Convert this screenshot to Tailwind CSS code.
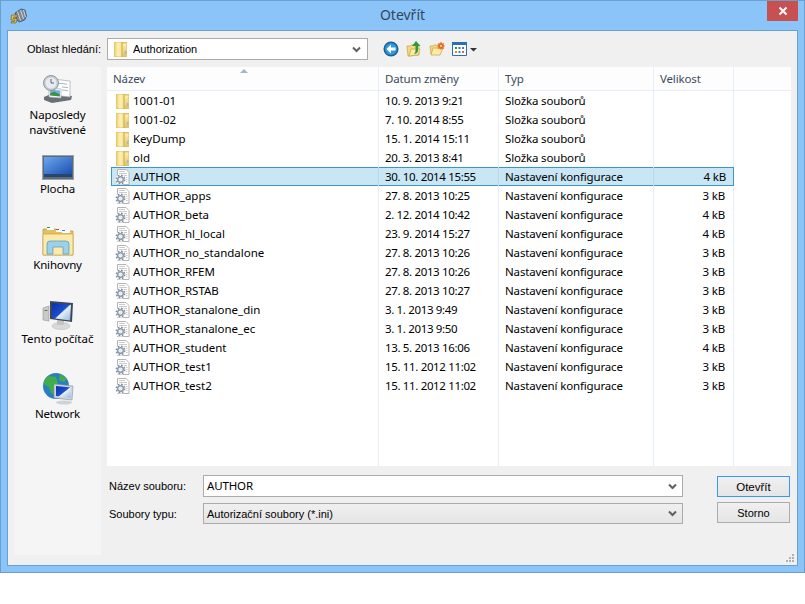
<!DOCTYPE html>
<html>
<head>
<meta charset="utf-8">
<title>Otevřít</title>
<script src="https://cdn.jsdelivr.net/npm/@tailwindcss/browser@4"></script>
</head>
<body class="bg-white font-['Noto_Sans','Open_Sans',sans-serif] text-[11.5px] tracking-[-0.15px] leading-[16px] text-black">

<svg width="0" height="0" class="absolute">
  <defs>
    <linearGradient id="fold" x1="0" y1="0" x2="1" y2="0"><stop offset="0" stop-color="#ecce70"/><stop offset=".5" stop-color="#fff2b4"/><stop offset="1" stop-color="#f8e294"/></linearGradient>
    <linearGradient id="foldr" x1="0" y1="0" x2="0" y2="1"><stop offset="0" stop-color="#fdeeb0"/><stop offset="1" stop-color="#e6c262"/></linearGradient>
    <linearGradient id="screen" x1="0" y1="0" x2="1" y2="1"><stop offset="0" stop-color="#6aa8ee"/><stop offset="1" stop-color="#1c4fb0"/></linearGradient>
    <linearGradient id="crt" x1="0" y1="0" x2="1" y2="1"><stop offset="0" stop-color="#0a2fa8"/><stop offset=".5" stop-color="#1b4fd0"/><stop offset=".55" stop-color="#e6f0fb"/><stop offset="1" stop-color="#8fb6e0"/></linearGradient>
    <symbol id="folder" viewBox="0 0 16 16">
      <path d="M1 1h13v15H1z" fill="#e2c266"/>
      <path d="M1.500 1.500h7v14h-7z" fill="url(#fold)"/>
      <path d="M8.500 1h1.200v15H8.500z" fill="#d6b354"/>
      <path d="M9.700 2.500h3.800V15H9.700z" fill="url(#foldr)"/>
      <path d="M12 10h1.500v3H12z" fill="#8fbce0"/>
    </symbol>
    <symbol id="conf" viewBox="0 0 16 16">
      <path d="M2.500.5h8.500l3 3v12H2.500z" fill="#fff" stroke="#b4b4b4"/>
      <path d="M4 2.500h6M4 4.500h8M4 6.500h8M11 8.500h1.500M11 10.500h1.500M11 12.500h1.500" stroke="#cbcbcb"/>
      <circle cx="5.500" cy="10.500" r="5.200" fill="#fff"/>
      <circle cx="5.500" cy="10.500" r="4.200" fill="none" stroke="#7e8c9c" stroke-width="1.500" stroke-dasharray="1.700 1.600"/>
      <circle cx="5.500" cy="10.500" r="2.800" fill="none" stroke="#8997a8" stroke-width="1.400"/>
      <circle cx="5.500" cy="10.500" r="1.300" fill="#dde6ef"/>
    </symbol>
    <symbol id="chev" viewBox="0 0 9 7">
      <path d="M1 1.500l3.500 3.500L8 1.500" fill="none" stroke="#606060" stroke-width="2"/>
    </symbol>
  </defs>
</svg>

<div class="w-[805px] h-[573px] flex flex-col border border-[#6b9fcf] bg-[#8bc4f8]">

  <!-- title bar -->
  <div class="h-[29px] shrink-0 relative flex items-center justify-center">
    <svg class="absolute left-[9px] top-[7px]" width="17" height="16" viewBox="0 0 17 16">
      <path d="M5 5l6-4 4 1 1.500 6-2 4-5 2-3-2z" fill="#7a8794" stroke="#39434e" stroke-width=".7"/>
      <path d="M7.500 3.500l3 9M10.500 2l3 9M13.500 2l2 7" stroke="#cdd6de" stroke-width="1"/>
      <path d="M1.500 7H7.500L7 9H3.800L3.500 10.500H6.500l.5 1-1 3.500H1l.4-1.500h3l.4-1.500H1z" fill="#e9b93a" stroke="#5a4410" stroke-width=".5"/>
    </svg>
    <span class="text-[14px] tracking-normal leading-[20px] text-[#34475a] -mt-[1px]">Otevřít</span>
    <div class="absolute right-[6px] top-0 w-[31px] h-[20px] bg-[#c75050] flex items-center justify-center">
      <svg width="10" height="10" viewBox="0 0 10 10"><path d="M1.500 1.500l7 7M8.500 1.500l-7 7" stroke="#fff" stroke-width="2"/></svg>
    </div>
  </div>

  <!-- client area -->
  <div class="mx-[6px] h-[536px] border border-[#6b9fcf] bg-[#f0f0f0] flex flex-col relative">

    <!-- toolbar -->
    <div class="h-[36px] shrink-0 flex items-center pl-[19px] font-['Liberation_Sans',sans-serif] text-[11px] tracking-normal">
      <span class="w-[80px] shrink-0 whitespace-nowrap">Oblast hledání:</span>
      <div class="w-[261px] h-[22px] border border-[#ababab] bg-white flex items-center pl-[5px] pr-[6px]">
        <svg width="16" height="16"><use href="#folder"/></svg>
        <span class="ml-[4px] flex-1">Authorization</span>
        <svg width="9" height="7"><use href="#chev"/></svg>
      </div>
      <div class="flex items-center ml-[15px]">
        <svg width="16" height="16" viewBox="0 0 16 16">
          <circle cx="8" cy="8" r="7.500" fill="#1a5f94"/>
          <circle cx="8" cy="8" r="6" fill="#2f9adf"/>
          <path d="M8 3.500L3.500 8 8 12.500v-3h4.500v-3H8z" fill="#fff"/>
        </svg>
        <svg class="ml-[7px]" width="16" height="16" viewBox="0 0 16 16">
          <path d="M1 5h3l1-1h8v10l-10 1H2z" fill="#f3d980" stroke="#c9a23f" stroke-width=".7"/>
          <path d="M3 15l2-7h9l-2 6z" fill="#fbeaa8" stroke="#c9a23f" stroke-width=".7"/>
          <path d="M10 0l4.500 5H12v5q-1 3-4 3 2-2 1.500-4V5H6z" fill="#2f9a3a"/>
        </svg>
        <svg class="ml-[7px]" width="16" height="16" viewBox="0 0 16 16">
          <path d="M1 5h3l1-1h6v9H2z" fill="#f3d980" stroke="#c9a23f" stroke-width=".7"/>
          <path d="M2 14l2-7h10l-3 7z" fill="#fbeaa8" stroke="#c9a23f" stroke-width=".7"/>
          <path d="M12 .5l1 2 2-.5-.5 2 1.500 1-1.500 1 .5 2-2-.5-1 1.500-1-1.500-2 .5.500-2L8 5l1.500-1L9 2l2 .5z" fill="#e8682c"/>
          <circle cx="12" cy="5" r="1" fill="#ffe9a0"/>
        </svg>
        <svg class="ml-[7px]" width="25" height="15" viewBox="0 0 25 15">
          <path d="M.5.500h14v13H.5z" fill="#fff" stroke="#2b6fb8"/>
          <path d="M0 0h15v3H0z" fill="#2b6fb8"/>
          <path d="M3 5h2v2H3z" fill="#4a8a3a"/><path d="M6.500 5h2v2h-2z" fill="#5b6b7c"/><path d="M10 5h2v2h-2z" fill="#3c7fd0"/>
          <path d="M3 9h2v2H3z" fill="#e08a2c"/><path d="M6.500 9h2v2h-2z" fill="#3c7fd0"/><path d="M10 9h2v2h-2z" fill="#c96a50"/>
          <path d="M18 6h7l-3.500 3.500z" fill="#333"/>
        </svg>
      </div>
    </div>

    <!-- main -->
    <div class="flex flex-1 min-h-0 pl-[6px] pr-[6px] pb-[10px] gap-[6px]">

      <!-- places -->
      <div class="w-[87px] bg-[#f5f5f5] flex flex-col items-center text-center">
        <svg class="mt-[6px]" width="32" height="32" viewBox="0 0 32 32">
          <path d="M2 24l7-3 21 2-1 4-19 3-8-3z" fill="#6a6f76"/>
          <path d="M11 6l17 2v16l-17-2z" fill="#fff" stroke="#a5aab0" stroke-width=".7"/>
          <path d="M14 10l11 1.200M20 14l6 .7M20 17l6 .7" stroke="#a9b4c2"/>
          <path d="M7 15l12 1v9L7 24z" fill="#fff" stroke="#a5aab0" stroke-width=".7"/>
          <path d="M8 16.500l10 1v4l-10-1z" fill="#6fb2e6"/>
          <path d="M8 20.500l4-2 6 3v2l-10-1z" fill="#3d8f4a"/>
          <circle cx="9" cy="10" r="7.500" fill="#c6ccd3" stroke="#8d959e"/>
          <circle cx="9" cy="10" r="5.500" fill="#e8ecf0"/>
          <path d="M9 6v4h3" fill="none" stroke="#5a6470" stroke-width="1"/>
        </svg>
        <div class="mt-[2px] leading-[15px]">Naposledy<br>navštívené</div>

        <svg class="mt-[18px]" width="32" height="25" viewBox="0 0 32 25">
          <path d="M0 0h32v25H0z" fill="#9aa0a8"/>
          <path d="M1 1h30v23H1z" fill="#5d6a78"/>
          <path d="M2 2h28v17H2z" fill="url(#screen)"/>
          <path d="M2 19h28v3H2z" fill="#27466f"/>
        </svg>
        <div class="mt-[1px] leading-[15px]">Plocha</div>

        <svg class="mt-[30px]" width="32" height="30" viewBox="0 0 32 30">
          <path d="M1 3h13l2 2h15v24H1z" fill="#e3c064" stroke="#b8964a" stroke-width=".7"/>
          <path d="M5 1h7v3H5z" fill="#fff"/><path d="M5 1h3v1H5z" fill="#2f9a3a"/>
          <path d="M14 3h8v3h-8z" fill="#fff"/><path d="M14 3h3v1h-3z" fill="#d2402c"/>
          <path d="M20 4h8v3h-8z" fill="#fff"/><path d="M20 4h3v1h-3z" fill="#3c7fd0"/>
          <path d="M1 8h30v21H1z" fill="#fbeaa8" stroke="#c9a23f" stroke-width=".7"/>
          <path d="M5 28V18q0-3 3-3h16q3 0 3 3v10h-6v-7H11v7z" fill="#9fd0ea" stroke="#4f97c2" stroke-width=".7"/>
        </svg>
        <div class="mt-[1px] leading-[15px]">Knihovny</div>

        <svg class="mt-[28px]" width="32" height="30" viewBox="0 0 32 30">
          <path d="M1 8l6-2v15l-6-1z" fill="#c9c9c9" stroke="#8a8a8a" stroke-width=".5"/>
          <path d="M2.500 10h3v1h-3z" fill="#4a8a3a"/>
          <ellipse cx="19" cy="26" rx="9" ry="3.500" fill="#d9d9d9" stroke="#b5b5b5" stroke-width=".5"/>
          <path d="M15 20h7v5h-7z" fill="#c4c4c4"/>
          <path d="M8 1l23 2-1 19-22-3z" fill="#3c4858"/>
          <path d="M10 3l19 1.800-1 15.700-18-2.500z" fill="url(#crt)"/>
        </svg>
        <div class="mt-[1px] leading-[15px] tracking-normal">Tento počítač</div>

        <svg class="mt-[27px]" width="32" height="32" viewBox="0 0 32 32">
          <circle cx="14" cy="13" r="13" fill="#2b7fbf"/>
          <path d="M6 3l8 1 2 6-4 5 1 7-4-2-2-6-5-3q0-5 4-8zM18 1l7 5-3 3-5-2z" fill="#3fae4a"/>
          <ellipse cx="22" cy="29.500" rx="8" ry="2" fill="#cfd2d6"/>
          <path d="M12 11l19 2-1 14-18-2z" fill="#cfd4da" stroke="#8a9098" stroke-width=".6"/>
          <path d="M14 13l15 1.500-.5 10.500L14 23z" fill="url(#crt)"/>
        </svg>
        <div class="mt-[1px] leading-[15px]">Network</div>
      </div>

      <div class="flex-1 flex flex-col min-w-0">
        <!-- file list -->
        <div id="list" class="h-[399px] bg-white flex flex-col shrink-0">
          <div class="relative h-[24px] shrink-0 flex border-b border-[#e5eefa] bg-[#fdfdfd] text-[#3b4b5e]">
            <div class="w-[272px] px-[6px] pt-[4px] border-r border-[#e5eefa]">Název</div>
            <div class="w-[120px] px-[6px] pt-[4px] border-r border-[#e5eefa]">Datum změny</div>
            <div class="w-[155px] px-[6px] pt-[4px] border-r border-[#e5eefa]">Typ</div>
            <div class="w-[80px] px-[6px] pt-[4px] border-r border-[#e5eefa]">Velikost</div>
            <svg class="absolute left-[133px] top-[2px]" width="8" height="4" viewBox="0 0 8 4"><path d="M4 0l4 4H0z" fill="#9cb8d0"/></svg>
          </div>

          <div id="rows" class="contents"></div>

          <!-- column lines run on below the last row -->
          <div class="flex flex-1">
            <div class="w-[272px] border-r border-[#e5eefa]"></div>
            <div class="w-[120px] border-r border-[#e5eefa]"></div>
            <div class="w-[155px] border-r border-[#e5eefa]"></div>
            <div class="w-[80px] border-r border-[#e5eefa]"></div>
          </div>
        </div>

        <!-- file name / type -->
        <div class="grid grid-cols-[96px_480px_107px] gap-y-[6px] pt-[9px] font-['Liberation_Sans',sans-serif] text-[11px] tracking-normal">
          <div class="flex items-center pl-[2px]">Název souboru:</div>
          <div class="h-[22px] border border-[#ababab] bg-white flex items-center pl-[3px] pr-[5px]">
            <span class="flex-1 font-['Noto_Sans',sans-serif] text-[11.5px] tracking-[-0.15px]">AUTHOR</span>
            <svg width="9" height="7"><use href="#chev"/></svg>
          </div>
          <div class="ml-auto w-[73px] h-[21px] mt-[1px] border border-[#3399ff] bg-gradient-to-b from-[#f0f0f0] to-[#e5e5e5] flex items-center justify-center text-[11.5px]">Otevřít</div>
          <div class="flex items-center pl-[2px]">Soubory typu:</div>
          <div class="h-[21px] border border-[#ababab] bg-gradient-to-b from-[#f0f0f0] to-[#e5e5e5] flex items-center pl-[3px] pr-[5px]">
            <span class="flex-1">Autorizační soubory (*.ini)</span>
            <svg width="9" height="7"><use href="#chev"/></svg>
          </div>
          <div class="ml-auto w-[73px] h-[21px] -mt-[1px] border border-[#acacac] bg-gradient-to-b from-[#f0f0f0] to-[#e5e5e5] flex items-center justify-center">Storno</div>
        </div>
      </div>
    </div>

    <!-- resize grip -->
    <svg class="absolute right-[2px] bottom-[2px]" width="9" height="9" viewBox="0 0 9 9" fill="#b0b0b0">
      <path d="M6 0h2v2H6zM3 3h2v2H3zM6 3h2v2H6zM0 6h2v2H0zM3 6h2v2H3zM6 6h2v2H6z"/>
    </svg>
  </div>
</div>

<script>
// name, date, size (no size = folder)
const files = [
  ['1001-01', '10. 9. 2013 9:21'],
  ['1001-02', '7. 10. 2014 8:55'],
  ['KeyDump', '15. 1. 2014 15:11'],
  ['old', '20. 3. 2013 8:41'],
  ['AUTHOR', '30. 10. 2014 15:55', '4 kB'],
  ['AUTHOR_apps', '27. 8. 2013 10:25', '3 kB'],
  ['AUTHOR_beta', '2. 12. 2014 10:42', '4 kB'],
  ['AUTHOR_hl_local', '23. 9. 2014 15:27', '4 kB'],
  ['AUTHOR_no_standalone', '27. 8. 2013 10:26', '3 kB'],
  ['AUTHOR_RFEM', '27. 8. 2013 10:26', '3 kB'],
  ['AUTHOR_RSTAB', '27. 8. 2013 10:27', '3 kB'],
  ['AUTHOR_stanalone_din', '3. 1. 2013 9:49', '3 kB'],
  ['AUTHOR_stanalone_ec', '3. 1. 2013 9:50', '3 kB'],
  ['AUTHOR_student', '13. 5. 2013 16:06', '4 kB'],
  ['AUTHOR_test1', '15. 11. 2012 11:02', '3 kB'],
  ['AUTHOR_test2', '15. 11. 2012 11:02', '3 kB'],
];

document.getElementById('rows').innerHTML = files.map(([name, date, size]) => {
  const selected = name === 'AUTHOR';
  const line = selected ? 'border-[#b9d8ee]' : 'border-[#e5eefa]';
  return `<div class="relative flex h-[19px] shrink-0 items-center">
    ${selected ? '<div class="absolute left-[4px] top-0 w-[623px] h-[19px] bg-[#c9e6f5] border border-[#3d95c9]"></div>' : ''}
    <div class="relative w-[272px] h-full pl-[8px] flex items-center gap-[2px] tracking-normal border-r ${line}"><svg width="16" height="16"><use href="#${size ? 'conf' : 'folder'}"/></svg><span>${name}</span></div>
    <div class="relative w-[120px] h-full pl-[6px] flex items-center tracking-[-0.35px] border-r ${line}">${date}</div>
    <div class="relative w-[155px] h-full pl-[6px] flex items-center border-r ${line}">${size ? 'Nastavení konfigurace' : 'Složka souborů'}</div>
    <div class="relative w-[80px] h-full pr-[8px] flex items-center justify-end ${selected ? '' : 'border-r border-[#e5eefa]'}">${size || ''}</div>
  </div>`;
}).join('');
</script>
</body>
</html>
